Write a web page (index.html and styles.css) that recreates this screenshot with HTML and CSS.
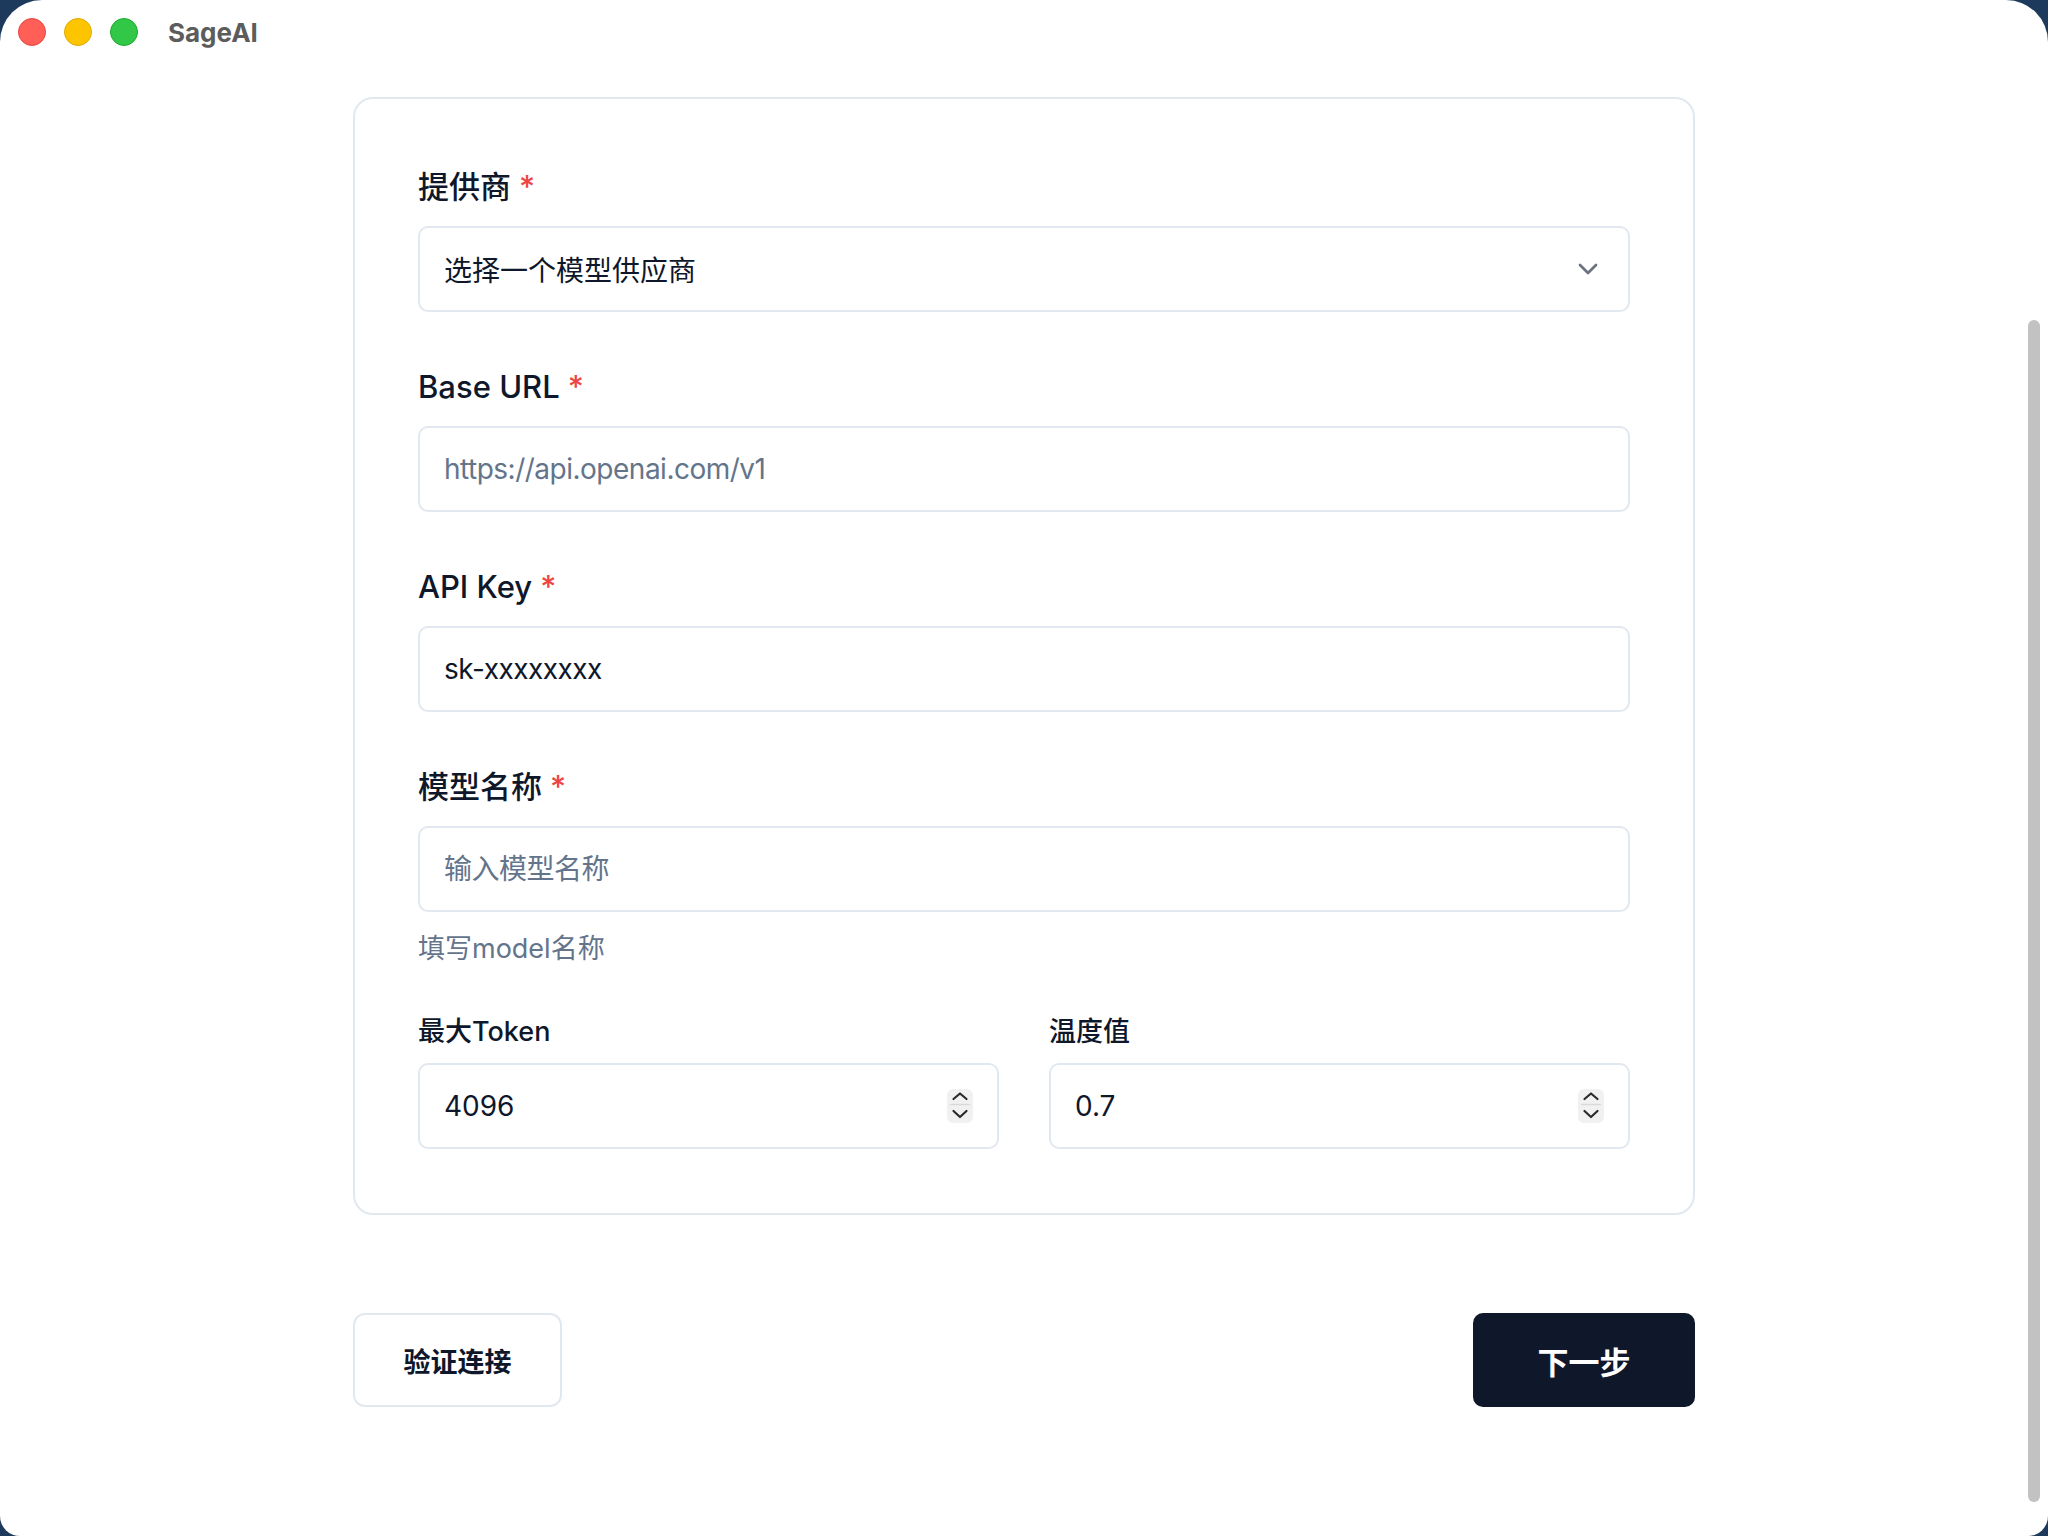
FILE: index.html
```html
<!DOCTYPE html>
<html lang="zh-CN">
<head>
  <meta charset="UTF-8" />
  <meta name="viewport" content="width=device-width, initial-scale=1.0"/>
  <title>SageAI</title>
  <link rel="stylesheet" href="styles.css">
</head>
<body>

  <div class="window">
    <div class="titlebar">
      <span class="light light-red"></span>
      <span class="light light-yellow"></span>
      <span class="light light-green"></span>
      <span class="app-title">SageAI</span>
    </div>

    <main class="content">
      <div class="card">
        <form class="form">
          <div class="field">
            <label class="field-label">提供商<span class="required">*</span></label>
            <div class="select-box">
              <span class="select-text">选择一个模型供应商</span>
              <svg class="chevron" width="32" height="32" viewBox="0 0 24 24" fill="none" stroke="#6b7280" stroke-width="2" stroke-linecap="round" stroke-linejoin="round"><path d="m6 9 6 6 6-6"/></svg>
            </div>
          </div>

          <div class="field">
            <label class="field-label">Base URL<span class="required">*</span></label>
            <input class="text-input" type="text" placeholder="https://api.openai.com/v1" />
          </div>

          <div class="field">
            <label class="field-label">API Key<span class="required">*</span></label>
            <input class="text-input" type="text" value="sk-xxxxxxxx" />
          </div>

          <div class="field field-with-hint">
            <label class="field-label">模型名称<span class="required">*</span></label>
            <input class="text-input" type="text" placeholder="输入模型名称" />
            <p class="hint">填写model名称</p>
          </div>

          <div class="field-row">
            <div class="field field-small">
              <label class="field-label small">最大Token</label>
              <div class="number-box">
                <input class="number-input" type="text" value="4096" />
                <svg class="spinner" width="26" height="34" viewBox="0 0 26 34" fill="none" stroke-linecap="round" stroke-linejoin="round">
                  <rect width="26" height="34" rx="6" fill="#f1f1f1" stroke="none"/>
                  <path d="M6.5 10 L13 4.5 L19.5 10" stroke="#2b2b2b" stroke-width="2.2"/>
                  <path d="M3.5 15.5 H22.5" stroke="#dadada" stroke-width="1.5"/>
                  <path d="M6.5 22 L13 28 L19.5 22" stroke="#2b2b2b" stroke-width="2.2"/>
                </svg>
              </div>
            </div>
            <div class="field field-small">
              <label class="field-label small">温度值</label>
              <div class="number-box">
                <input class="number-input" type="text" value="0.7" />
                <svg class="spinner" width="26" height="34" viewBox="0 0 26 34" fill="none" stroke-linecap="round" stroke-linejoin="round">
                  <rect width="26" height="34" rx="6" fill="#f1f1f1" stroke="none"/>
                  <path d="M6.5 10 L13 4.5 L19.5 10" stroke="#2b2b2b" stroke-width="2.2"/>
                  <path d="M3.5 15.5 H22.5" stroke="#dadada" stroke-width="1.5"/>
                  <path d="M6.5 22 L13 28 L19.5 22" stroke="#2b2b2b" stroke-width="2.2"/>
                </svg>
              </div>
            </div>
          </div>
        </form>
      </div>

      <div class="actions">
        <button class="btn btn-outline" type="button">验证连接</button>
        <button class="btn btn-primary" type="button">下一步</button>
      </div>
    </main>

    <div class="scrollbar"></div>
  </div>

</body>
</html>
```

FILE: styles.css
```css
* {
  box-sizing: border-box;
  margin: 0;
  padding: 0;
}

body {
  font-family: "Inter", "Noto Sans CJK SC", sans-serif;
  background-color: #1d3a5c;
  color: #0f172a;
}

.window {
  position: relative;
  height: 100vh;
  background-color: #ffffff;
  border-radius: 42px 42px 20px 20px;
  overflow: hidden;
}

/* title bar */
.titlebar {
  display: flex;
  align-items: center;
  height: 64px;
  padding-left: 18px;
}

.light {
  width: 28px;
  height: 28px;
  border-radius: 50%;
  margin-right: 18px;
}

.light-red {
  background-color: #ff5f57;
  border: 1px solid #e2463f;
}

.light-yellow {
  background-color: #fdc400;
  border: 1px solid #e0a800;
}

.light-green {
  background-color: #33c748;
  border: 1px solid #1aab2f;
}

.app-title {
  margin-left: 12px;
  font-size: 26px;
  font-weight: 700;
  color: #5c5c5c;
}

/* main */
.content {
  width: 1342px;
  margin: 33px auto 0;
}

.card {
  border: 2px solid #e2e8f0;
  border-radius: 20px;
  padding: 68px 63px 64px;
}

.form {
  display: flex;
  flex-direction: column;
}

.field {
  display: flex;
  flex-direction: column;
  gap: 19px;
  margin-bottom: 55px;
}

.field-with-hint {
  margin-bottom: 45px;
}

.field-label {
  font-size: 31px;
  font-weight: 500;
  line-height: 40px;
}

.field-label.small {
  font-size: 27px;
}

.required {
  color: #ef4444;
  margin-left: 8px;
}

.select-box,
.text-input,
.number-box {
  height: 86px;
  border: 2px solid #e2e8f0;
  border-radius: 10px;
  background-color: #ffffff;
}

.select-box {
  display: flex;
  align-items: center;
  justify-content: space-between;
  padding: 0 24px;
}

.select-text {
  font-size: 28px;
}

.text-input {
  width: 100%;
  padding: 0 24px;
  font-family: inherit;
  font-size: 28px;
  letter-spacing: -0.5px;
  color: #0f172a;
  outline: none;
}

.text-input::placeholder {
  color: #64748b;
}

.hint {
  font-size: 27px;
  line-height: 36px;
  color: #64748b;
}

.field-row {
  display: grid;
  grid-template-columns: 1fr 1fr;
  gap: 50px;
}

.field-small {
  gap: 11px;
  margin-bottom: 0;
}

.number-box {
  display: flex;
  align-items: center;
  padding: 0 24px;
}

.number-input {
  flex: 1;
  min-width: 0;
  border: none;
  outline: none;
  font-family: inherit;
  font-size: 28px;
  color: #0f172a;
  background: transparent;
}

.spinner {
  flex-shrink: 0;
}

/* buttons */
.actions {
  display: flex;
  justify-content: space-between;
  margin-top: 98px;
}

.btn {
  height: 94px;
  font-family: inherit;
  font-weight: 600;
  cursor: pointer;
}

.btn-outline {
  width: 209px;
  background-color: #ffffff;
  border: 2px solid #e2e8f0;
  border-radius: 12px;
  font-size: 27px;
  color: #0f172a;
}

.btn-primary {
  width: 222px;
  background-color: #0f172a;
  border: none;
  border-radius: 10px;
  font-size: 31px;
  color: #ffffff;
}

.btn-primary:hover {
  background-color: #1e293b;
}

/* overlay scrollbar thumb */
.scrollbar {
  position: absolute;
  top: 320px;
  right: 8px;
  width: 12px;
  height: 1182px;
  border-radius: 6px;
  background-color: #c2c2c2;
}
```
